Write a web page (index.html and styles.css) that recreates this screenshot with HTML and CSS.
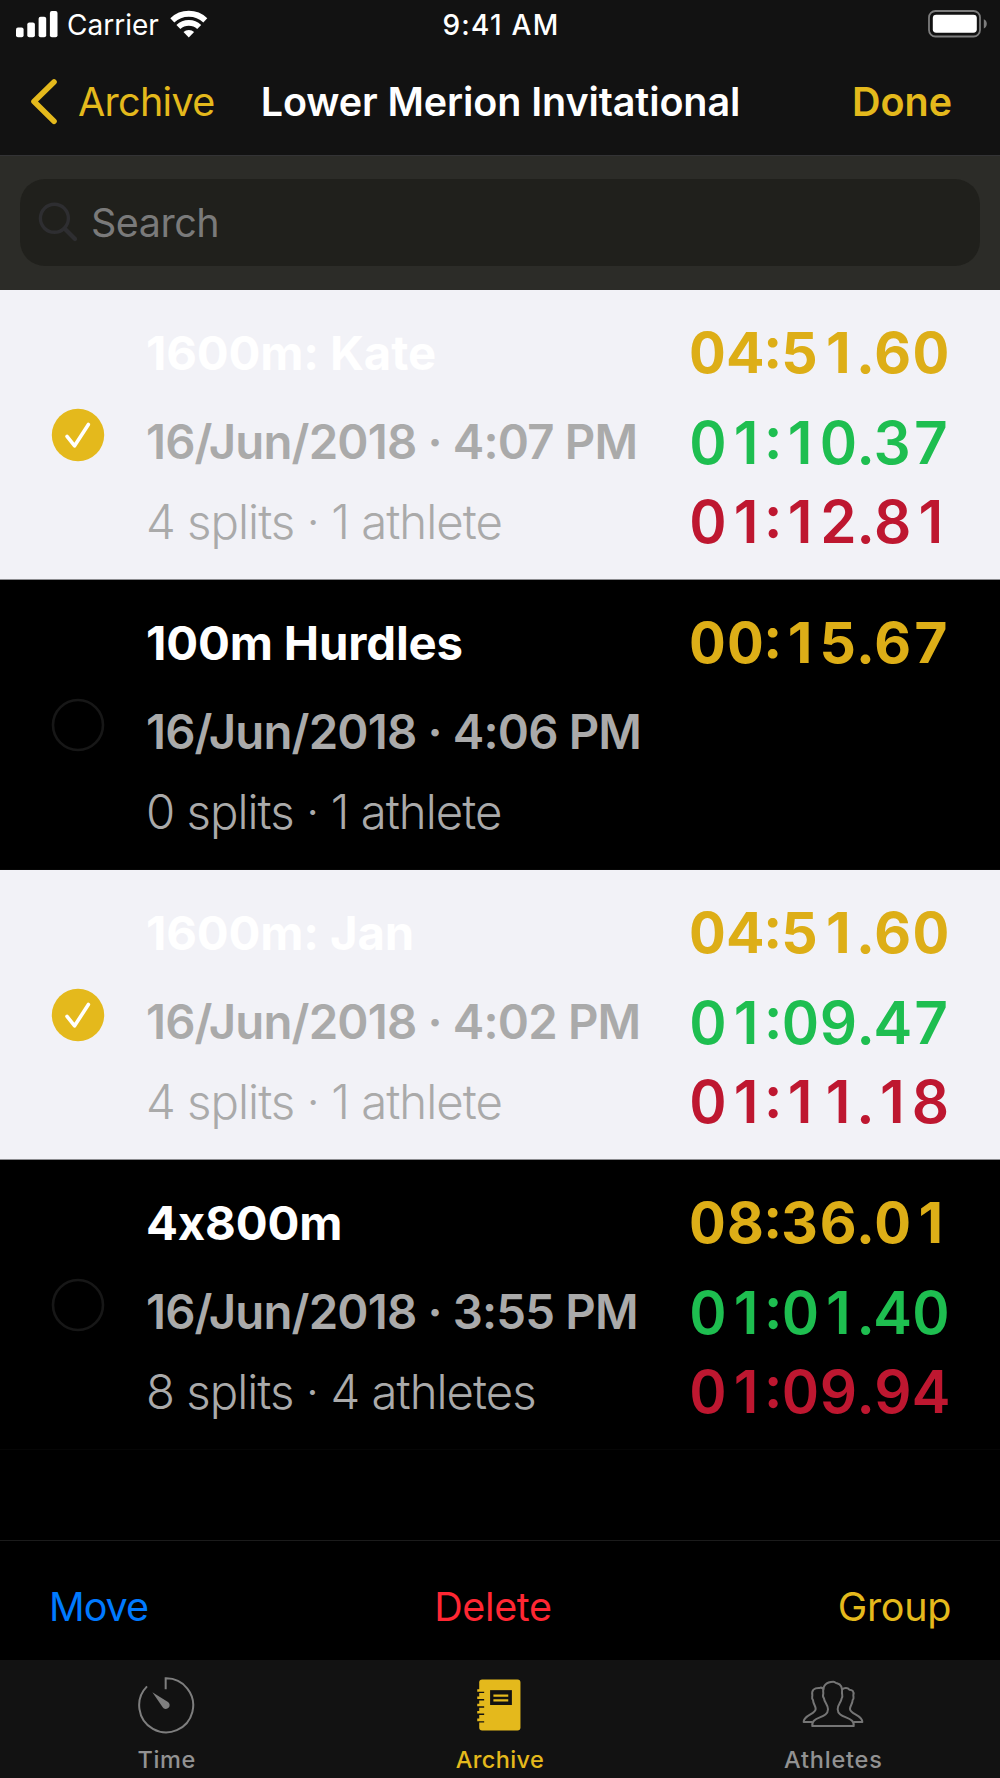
FILE: index.html
```html
<!DOCTYPE html>
<html lang="en">
<head>
    <meta charset="UTF-8">
    <meta name="viewport" content="width=device-width, initial-scale=1.0">
    <title>Lower Merion Invitational</title>
    <link rel="stylesheet" href="styles.css">
</head>
<body>
    <header class="header">
        <div class="status-bar">
            <div class="status-left">
                <svg class="signal" width="42" height="27" viewBox="0 0 42 27" fill="#fff">
                    <rect x="0" y="16.5" width="7.6" height="9.8" rx="2"/>
                    <rect x="11.3" y="11.5" width="7.6" height="14.8" rx="2"/>
                    <rect x="22.6" y="5.8" width="7.6" height="20.5" rx="2"/>
                    <rect x="33.9" y="0" width="7.6" height="26.3" rx="2"/>
                </svg>
                <span class="carrier">Carrier</span>
                <svg class="wifi" width="38" height="28" viewBox="0 0 38 28">
                    <g fill="none" stroke="#fff" stroke-width="5.8">
                        <path d="M2.3 10.3A24 24 0 0 1 35.3 10.3"/>
                        <path d="M8.4 17A15.2 15.2 0 0 1 29.2 17"/>
                    </g>
                    <path d="M18.8 27.5l-5.3-5.4a7.6 7.6 0 0 1 10.6 0z" fill="#fff"/>
                </svg>
            </div>
            <span class="clock">9:41 AM</span>
            <svg class="battery" width="60" height="28" viewBox="0 0 60 28">
                <rect x="1" y="1" width="51" height="25.5" rx="6.5" fill="none" stroke="#7d7d7d" stroke-width="1.8"/>
                <rect x="4.8" y="4.7" width="44" height="18" rx="3.4" fill="#fff"/>
                <path d="M55.8 9.2c4 1.5 4 7.6 0 9.2z" fill="#7d7d7d"/>
            </svg>
        </div>
        <nav class="nav-bar">
            <a class="back">
                <svg width="28" height="46" viewBox="0 0 28 46">
                    <path d="M24 3L4 22.6L24 42.2" fill="none" stroke="#e4b91c" stroke-width="5.6" stroke-linecap="round" stroke-linejoin="round"/>
                </svg>
                <span>Archive</span>
            </a>
            <h1>Lower Merion Invitational</h1>
            <a class="done">Done</a>
        </nav>
    </header>

    <div class="search">
        <div class="search-field">
            <svg width="40" height="40" viewBox="0 0 40 40" fill="none" stroke="#2e2e31" stroke-width="3.4" stroke-linecap="round">
                <circle cx="16.4" cy="16.3" r="14"/>
                <path d="M26.5 26.5L37 37" stroke-width="4.2"/>
            </svg>
            <span>Search</span>
        </div>
    </div>

    <main class="list">
        <div class="row selected">
            <svg class="check" width="54" height="54" viewBox="0 0 54 54">
                <circle cx="27" cy="27" r="26.2" fill="#e4b91c"/>
                <path d="M16 28.4L23.6 37.8L37.4 16.5" fill="none" stroke="#fff" stroke-width="3.6" stroke-linecap="round" stroke-linejoin="round"/>
            </svg>
            <div class="info">
                <h2>1600m: Kate</h2>
                <p class="date">16/Jun/2018 · 4:07 PM</p>
                <p class="splits">4 splits · 1 athlete</p>
            </div>
            <div class="times">
                <span class="total">04:5<i>1</i>.60</span>
                <span class="best">0<i>1</i>:<i>1</i>0.37</span>
                <span class="worst">0<i>1</i>:<i>1</i>2.8<i>1</i></span>
            </div>
        </div>
        <div class="row">
            <svg class="check" width="54" height="54" viewBox="0 0 54 54">
                <circle cx="27" cy="27" r="25" fill="none" stroke="#171717" stroke-width="2.6"/>
            </svg>
            <div class="info">
                <h2>100m Hurdles</h2>
                <p class="date">16/Jun/2018 · 4:06 PM</p>
                <p class="splits">0 splits · 1 athlete</p>
            </div>
            <div class="times">
                <span class="total">00:<i>1</i>5.67</span>
            </div>
        </div>
        <div class="row selected">
            <svg class="check" width="54" height="54" viewBox="0 0 54 54">
                <circle cx="27" cy="27" r="26.2" fill="#e4b91c"/>
                <path d="M16 28.4L23.6 37.8L37.4 16.5" fill="none" stroke="#fff" stroke-width="3.6" stroke-linecap="round" stroke-linejoin="round"/>
            </svg>
            <div class="info">
                <h2>1600m: Jan</h2>
                <p class="date">16/Jun/2018 · 4:02 PM</p>
                <p class="splits">4 splits · 1 athlete</p>
            </div>
            <div class="times">
                <span class="total">04:5<i>1</i>.60</span>
                <span class="best">0<i>1</i>:09.47</span>
                <span class="worst">0<i>1</i>:<i>1</i><i>1</i>.<i>1</i>8</span>
            </div>
        </div>
        <div class="row">
            <svg class="check" width="54" height="54" viewBox="0 0 54 54">
                <circle cx="27" cy="27" r="25" fill="none" stroke="#171717" stroke-width="2.6"/>
            </svg>
            <div class="info">
                <h2>4x800m</h2>
                <p class="date">16/Jun/2018 · 3:55 PM</p>
                <p class="splits">8 splits · 4 athletes</p>
            </div>
            <div class="times">
                <span class="total">08:36.0<i>1</i></span>
                <span class="best">0<i>1</i>:0<i>1</i>.40</span>
                <span class="worst">0<i>1</i>:09.94</span>
            </div>
        </div>
    </main>

    <div class="toolbar">
        <a class="move">Move</a>
        <a class="delete">Delete</a>
        <a class="group">Group</a>
    </div>

    <footer class="tab-bar">
        <a class="tab">
            <svg width="60" height="60" viewBox="53 30 180 180">
                <path d="M83 64A81 81 0 1 0 139 40V73" fill="none" stroke="#7e7e7e" stroke-width="6"/>
                <path d="M99 82L146 111A11.5 11.5 0 1 1 130 127Z" fill="#7e7e7e"/>
            </svg>
            <span class="tab-time">Time</span>
        </a>
        <a class="tab active">
            <svg width="66" height="60" viewBox="50 30 200 180">
                <rect x="87" y="43" width="125" height="154" rx="9" fill="#e4b91c"/>
                <path d="M81 76H102M81 98H102M81 120H102M81 142H102M81 165H102" stroke="#e4b91c" stroke-width="8"/>
                <path d="M86 82H102M86 104H102M86 126H102M86 148H102M86 171H102" stroke="#121212" stroke-width="4"/>
                <rect x="120" y="75" width="66" height="45" fill="#121212"/>
                <path d="M130 91.5H175M130 106H175" stroke="#e4b91c" stroke-width="6.5"/>
            </svg>
            <span class="tab-archive">Archive</span>
        </a>
        <a class="tab">
            <svg width="66" height="60" viewBox="60 30 198 180" fill="none" stroke="#757575" stroke-width="6" stroke-linejoin="round">
                <path d="M97 183C92 153 144 162 144 133C144 118 133 113 132 100C127 96 129 89 130 85C127 62 139 50 160 50C165 50 166 54 171 55C183 58 188 67 186 85C187 90 189 96 185 100C183 114 173 118 173 133C173 162 226 153 221 183Z"/>
                <path d="M97 171H71C71 149 107 148 107 132C107 121 100 119 99 105C94 101 97 96 97 91C94 76 102 68 119 69C124 66 129 70 132 74"/>
                <path d="M221 171H247C247 149 210 148 210 132C210 121 217 119 218 105C223 101 220 96 220 91C223 78 216 74 208 74C203 67 192 68 186 74"/>
            </svg>
            <span class="tab-athletes">Athletes</span>
        </a>
    </footer>
</body>
</html>
```
FILE: styles.css
```css
* {
    margin: 0;
    padding: 0;
    box-sizing: border-box;
}

body {
    width: 1000px;
    height: 1778px;
    overflow: hidden;
    background: #000;
    font-family: Inter, "Liberation Sans", sans-serif;
    display: flex;
    flex-direction: column;
    white-space: nowrap;
}

/* header */
.header {
    height: 155px;
    background: #121212;
    color: #fff;
}

.status-bar {
    height: 51px;
    display: grid;
    grid-template-columns: 1fr auto 1fr;
    align-items: center;
    padding: 0 12px 0 16px;
    font-size: 28px;
    line-height: 51px;
}

.status-left {
    display: flex;
    align-items: center;
}

.signal {
    margin-top: -3px;
}

.carrier {
    margin-left: 9px;
}

.wifi {
    margin-left: 11px;
    margin-top: -4px;
}

.clock {
    font-weight: 500;
    letter-spacing: 1.25px;
    margin-left: -2px;
}

.battery {
    justify-self: end;
    margin-top: -3px;
}

.nav-bar {
    height: 104px;
    padding: 0 48px 3px 30px;
    display: grid;
    grid-template-columns: 1fr auto 1fr;
    align-items: center;
    font-size: 39.5px;
}

.back {
    display: flex;
    align-items: center;
    color: #e4b91c;
    letter-spacing: -0.7px;
}

.back span {
    margin-left: 20px;
}

.nav-bar h1 {
    font-size: 39.5px;
    font-weight: 600;
    letter-spacing: -0.1px;
    margin-left: 19px;
}

.done {
    justify-self: end;
    color: #e4b91c;
    font-weight: 600;
}

/* search */
.search {
    height: 135px;
    padding: 23px 20px 0;
    background: #2c2c28;
    border-top: 1px solid #333335;
}

.search-field {
    height: 87px;
    padding-left: 18px;
    border-radius: 25px;
    background: #20201c;
    color: #7a7a7a;
    font-size: 39.5px;
    letter-spacing: -0.5px;
    display: flex;
    align-items: center;
}

.search-field svg {
    margin-top: -2px;
}

.search-field span {
    margin-left: 13px;
}

/* list */
.list {
    height: 1250px;
}

.row {
    height: 290px;
    display: grid;
    grid-template-columns: 145px 544px 1fr;
    border-bottom: 1px solid #060606;
}

.row.selected {
    background: #f2f2f7;
    border-bottom-color: #8d8d90;
}

.check {
    margin: 118px 0 0 51px;
}

.info,
.times {
    padding-top: 18px;
}

.info {
    padding-left: 1px;
    font-size: 47.3px;
    color: #aaa;
}

.info h2 {
    font-size: 47.3px;
    font-weight: 700;
    line-height: 90px;
    color: #fff;
    letter-spacing: -0.15px;
}

.date {
    font-weight: 600;
    line-height: 87px;
    letter-spacing: -0.82px;
}

.splits {
    font-weight: 300;
    line-height: 73px;
    letter-spacing: -0.98px;
}

.times {
    display: flex;
    flex-direction: column;
    font-variant-numeric: tabular-nums;
    font-feature-settings: "case";
    font-weight: 600;
}

/* narrow "1" centred in a full digit width */
.times i {
    display: inline-block;
    width: 0.65em;
    text-align: center;
    font-style: normal;
    font-variant-numeric: proportional-nums;
}

.total {
    font-size: 57px;
    font-weight: 700;
    line-height: 90px;
    letter-spacing: 1.2px;
    color: #ddae17;
}

.total i {
    width: 0.67em;
}

.best {
    font-size: 58.5px;
    line-height: 89px;
    letter-spacing: 0.4px;
    color: #1ebe50;
}

.worst {
    font-size: 58.5px;
    line-height: 70px;
    letter-spacing: 0.4px;
    color: #be1730;
}

/* toolbar */
.toolbar {
    height: 120px;
    padding: 13px 49px 0 49px;
    border-top: 1px solid #1b1b1b;
    display: flex;
    justify-content: space-between;
    align-items: center;
    font-size: 39.5px;
    letter-spacing: -0.35px;
}

.move {
    color: #007aff;
    letter-spacing: -1px;
}

.delete {
    color: #ff2733;
}

.group {
    color: #e4b91c;
}

/* tab bar */
.tab-bar {
    height: 118px;
    background: #121212;
    display: grid;
    grid-template-columns: repeat(3, 1fr);
}

.tab {
    padding-top: 15px;
    display: flex;
    flex-direction: column;
    align-items: center;
    color: #929292;
    font-size: 23.5px;
    font-weight: 500;
    line-height: 34px;
}

.tab span {
    margin-top: 8px;
}

.tab.active {
    color: #e4b91c;
}

.tab-time {
    letter-spacing: 0.6px;
}

.tab-archive {
    letter-spacing: 0.4px;
}

.tab-athletes {
    letter-spacing: 0.8px;
}
```
